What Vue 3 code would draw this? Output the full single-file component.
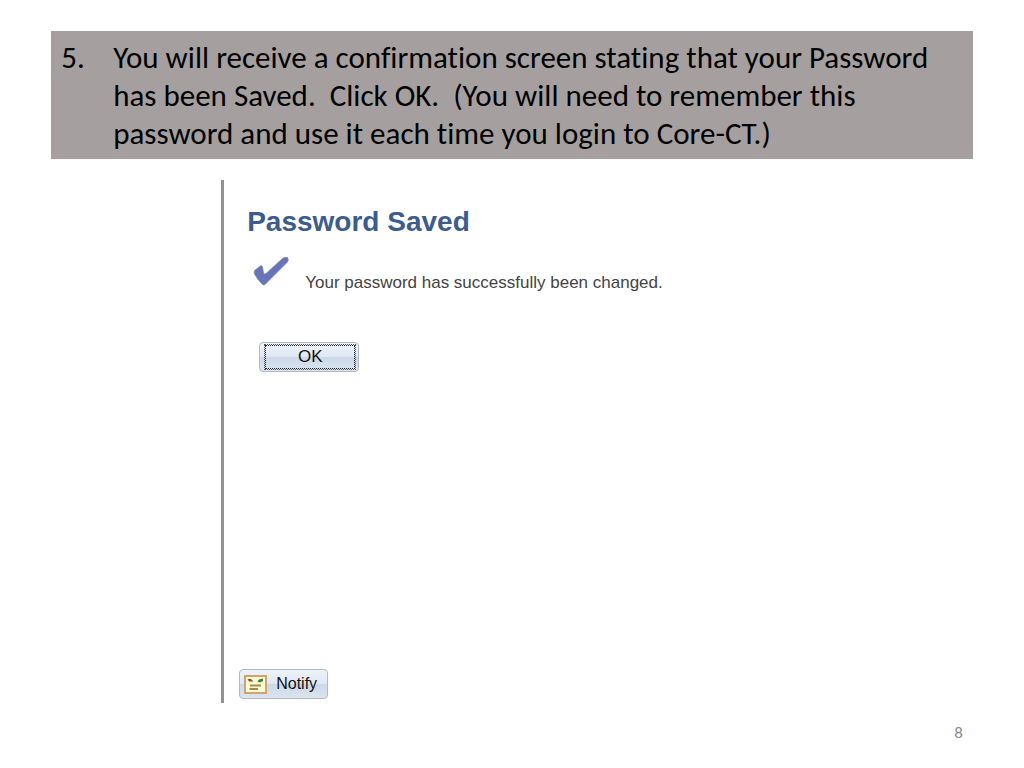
<template>
  <div class="slide">
    <header class="step">
      <span class="step-number">{{ step }}.</span>
      <p class="step-text">{{ instruction }}</p>
    </header>

    <main class="panel">
      <h1 class="title">Password Saved</h1>

      <div class="message">
        <svg class="check" viewBox="0 0 36 30" aria-hidden="true">
          <path
            d="M1.2 17.5 L1.5 14.5 L8 9.5 L9.5 10.5 L10.5 17 Q11.5 18.5 13 17.5 L29.5 2.5 Q32 0.5 34.5 1.5 Q36 3.5 34.5 6 L14 26.5 Q11 30.5 9 28 Q4 23 1.2 17.5 Z"
            fill="#6575b7"
            stroke="#8584a3"
            stroke-width="0.7"
          />
        </svg>
        <p>Your password has successfully been changed.</p>
      </div>

      <button type="button" class="btn ok"><span>OK</span></button>

      <button type="button" class="btn notify">
        <svg class="card" viewBox="0 0 23 19" aria-hidden="true">
          <rect x="1" y="1" width="21" height="17" fill="#fffbd2" stroke="#d3a272" stroke-width="2" />
          <path d="M3.5 4 L7 4 L9.5 6.5 L5 6.5 Z" fill="#a04a2c" />
          <path d="M13.5 6.5 L15 4.5 L19 3.5 L19 6 L16 7.5 Z" fill="#278a38" />
          <path d="M6 10.5 H17 M5.5 14 H14" stroke="#a58a4c" stroke-width="2" />
        </svg>
        Notify
      </button>
    </main>

    <footer class="page-number">{{ page }}</footer>
  </div>
</template>

<script setup>
import { ref } from 'vue'

const step = ref(5)
const page = ref(8)
const instruction = ref(
  'You will receive a confirmation screen stating that your Password has been Saved.  Click OK.  (You will need to remember this password and use it each time you login to Core-CT.)'
)
</script>

<style>
body {
  margin: 0;
  background: #fff;
}
</style>

<style scoped>
.slide {
  box-sizing: border-box;
  display: flex;
  flex-direction: column;
  min-height: 100vh;
  padding: 31px 5% 25px;
  font-family: Carlito, Calibri, Lato, sans-serif;
}

.step {
  display: flex;
  padding: 7px 10px;
  background: #a5a09f;
  color: #000;
  font-size: 31px;
  font-variant-ligatures: none;
  line-height: 38px;
}

.step-number {
  flex: 0 0 52px;
}

.step-text {
  margin: 0;
  white-space: pre-wrap;
}

.panel {
  display: flex;
  flex: 1;
  flex-direction: column;
  align-items: flex-start;
  margin: 21px 0 0 170px;
  padding: 24px 0 4px 15px;
  border-left: 3px solid #929292;
  font-family: "Liberation Sans", Arial, sans-serif;
}

.title {
  margin: 0 0 0 8px;
  color: #3c5c8e;
  font-size: 28px;
  line-height: 36px;
}

.message {
  display: flex;
  align-items: flex-start;
  gap: 16px;
  margin: 16px 0 0 14px;
  color: #444;
  font-size: 17px;
  line-height: 20px;
}

.message p {
  margin: 17px 0 0;
}

.check {
  width: 36px;
  height: 30px;
}

.btn {
  box-sizing: border-box;
  display: flex;
  align-items: center;
  height: 30px;
  border: 1px solid #b4b8c0;
  border-radius: 4px;
  background: linear-gradient(#eef3fa, #dfe8f3 48%, #cbd8e8 52%, #dce5f0);
  color: #111;
  font-family: inherit;
  font-size: 16px;
  cursor: pointer;
}

.ok {
  width: 100px;
  margin: 49px 0 0 20px;
  padding: 2px 3px 2px 5px;
  font-size: 17px;
}

.ok span {
  flex: 1;
  border: 1px dotted #222;
  outline: 1px dotted #555;
  line-height: 22px;
}

.notify {
  gap: 9px;
  margin-top: auto;
  padding: 0 10px 0 4px;
}

.card {
  width: 23px;
  height: 19px;
}

.page-number {
  margin-top: 20px;
  padding-right: 10px;
  color: #8b8b8b;
  font-size: 17px;
  line-height: 20px;
  text-align: right;
}
</style>
